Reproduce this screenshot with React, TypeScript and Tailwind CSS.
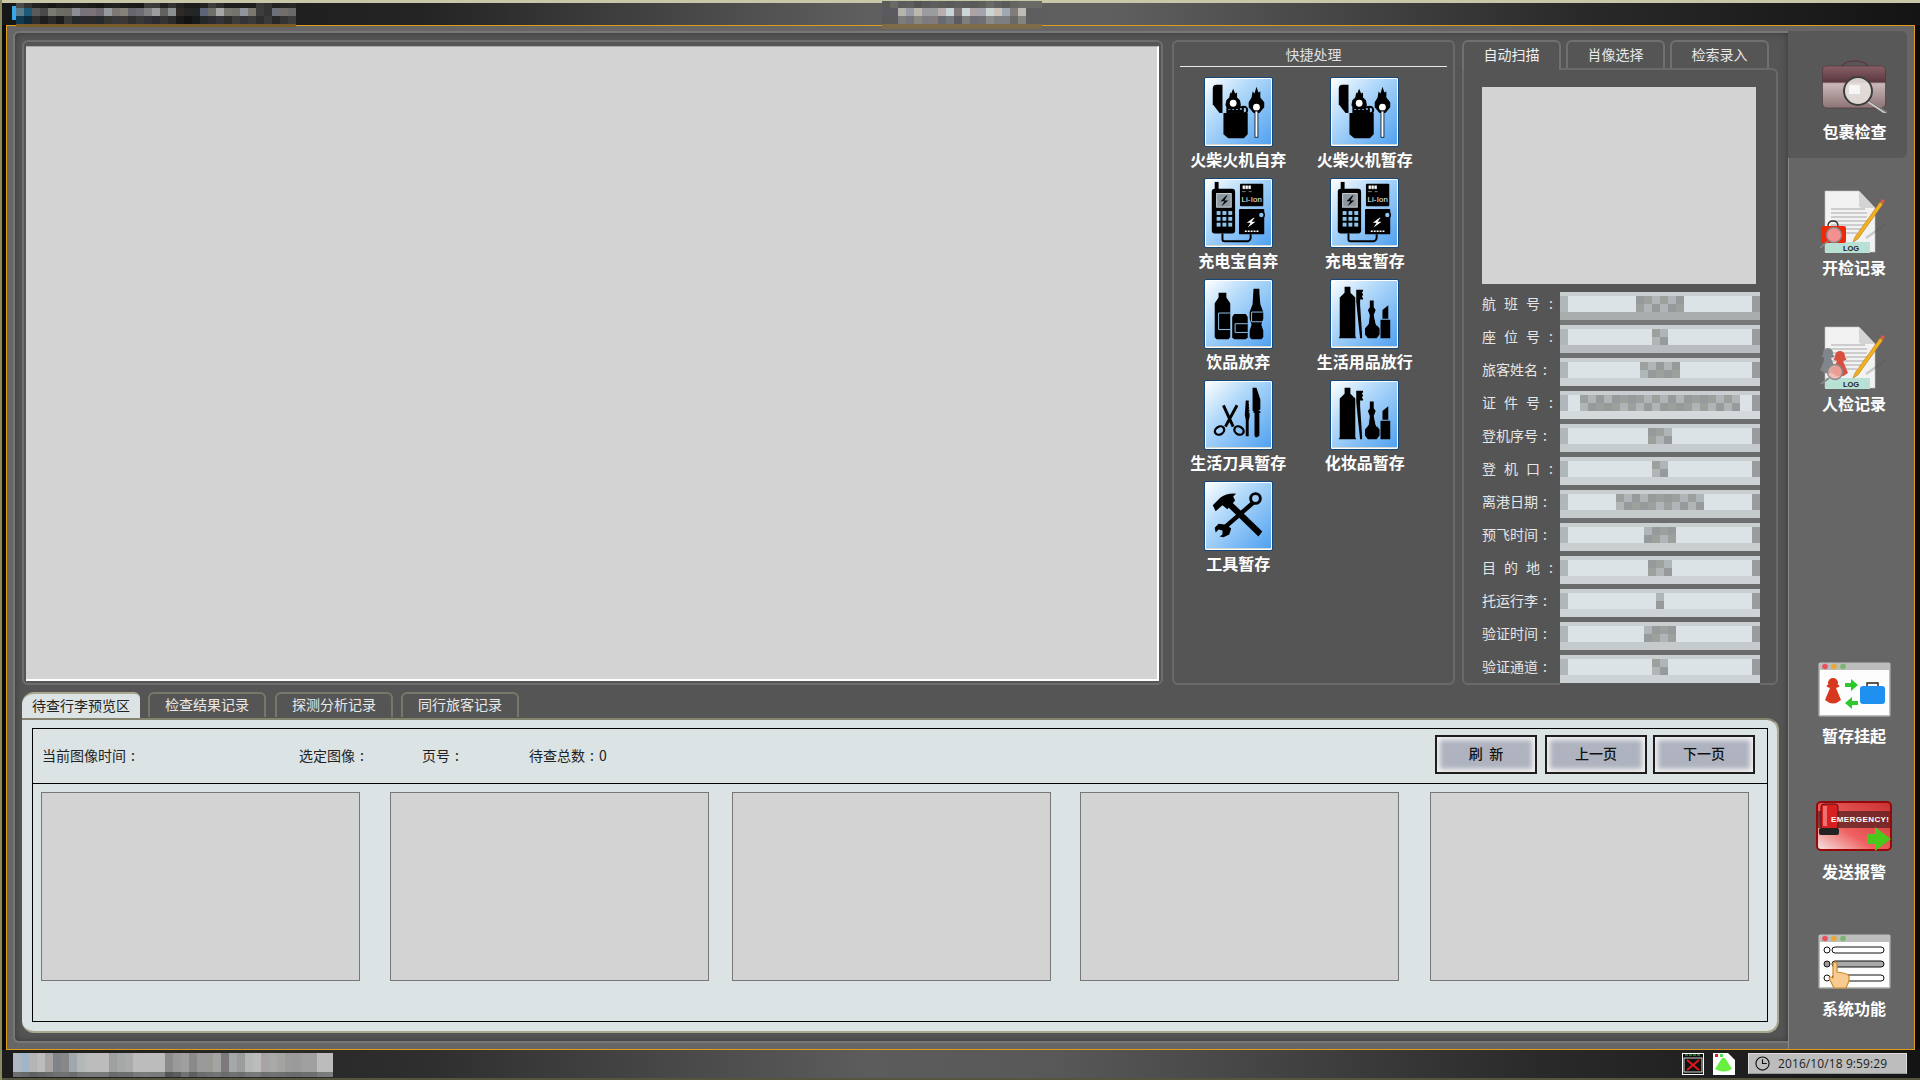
import React from "react";

const cjk = "font-['Noto_Sans_CJK_SC','Noto_Sans',sans-serif]";

// grey mosaic (the blurred out parts of the screenshot)
const Blocks = ({ shades, w = 8, h = 8 }: { shades: string; w?: number; h?: number }) => (
    <div className="flex">
        {shades.split(" ").map((c, i) => (
            <div key={i} style={{ background: `#${c}`, width: w, height: h }} />
        ))}
    </div>
);

const palette = ["969a9b", "a6acaf", "868c8f", "b0b6b8", "c2c7c8", "777c80", "9ca19d", "cdd2d3", "8e939a"];
const mix = (n: number, seed: number) =>
    Array.from({ length: n }, (_, i) => palette[(i * 5 + seed * 3 + (i % 3)) % palette.length]).join(" ");

const Field = ({ label, spaced, n, band, dark }: { label: string; spaced?: boolean; n: number; band: string; dark: string }) => (
    <div className="flex h-[33px] w-[278px] items-start">
        <div className="flex h-[22px] w-[78px] items-center text-[14px] text-[#e6e6e6]">
            <span className={spaced ? "tracking-[8px]" : ""}>{label}</span>
            <span className={spaced ? "ml-[1px]" : "ml-[5px]"}>:</span>
        </div>
        <div className="w-[200px]">
            <div className="h-[4px] bg-[#c9cfd1]" />
            <div className="flex h-[16px]">
                <div className="w-[8px] bg-[#b0b7ba]" />
                <div className="flex flex-1 items-center justify-center bg-[#dce3e6]">
                    <div>
                        <Blocks shades={mix(n, n)} />
                        <Blocks shades={mix(n, n + 2)} />
                    </div>
                </div>
                <div className="w-[8px] bg-[#999b9c]" />
            </div>
            <div className="h-[8px]" style={{ background: band }} />
            <div className="h-[5px]" style={{ background: dark }} />
        </div>
    </div>
);

const fields = [
    { label: "航班号", spaced: true, n: 6, band: "#a9adae", dark: "#767878" },
    { label: "座位号", spaced: true, n: 2, band: "#b9bdbf", dark: "#6f7071" },
    { label: "旅客姓名", n: 5, band: "#ccd2d4", dark: "#666767" },
    { label: "证件号", spaced: true, n: 20, band: "#d4dadc", dark: "#6c6d6e" },
    { label: "登机序号", n: 3, band: "#c5cbcd", dark: "#6a6b6b" },
    { label: "登机口", spaced: true, n: 2, band: "#cdd3d5", dark: "#6a6b6b" },
    { label: "离港日期", n: 11, band: "#c5cbcd", dark: "#6d6e6f" },
    { label: "预飞时间", n: 4, band: "#c9cfd1", dark: "#666767" },
    { label: "目的地", spaced: true, n: 3, band: "#cdd3d5", dark: "#6a6b6b" },
    { label: "托运行李", n: 1, band: "#cfd5d7", dark: "#666767" },
    { label: "验证时间", n: 4, band: "#c5cbcd", dark: "#6a6b6b" },
    { label: "验证通道", n: 2, band: "#cdd3d5", dark: "#555555" },
];

// black silhouettes for the quick buttons, all on a 69x70 box
const Lighter = () => (
    <svg viewBox="0 0 69 70" className="h-full w-full">
        <path d="M8 11q0-4 4-4h6v29h-3l-7-9z" fill="#000" />
        <path d="M19 36h25v22l-4 4H24l-5-4z" fill="#000" />
        <rect x="22" y="29" width="18" height="7" fill="#000" />
        <circle cx="40" cy="33" r="3.5" fill="none" stroke="#000" strokeWidth="2" />
        <path d="M24 32h14" stroke="#8fc4f2" strokeWidth="1.5" strokeDasharray="2 2" />
        <path d="M29 11l2 5 2-1 0 5 3 3 1 5-3 4H24l-3-4 1-5 3-3 1-5 1 1z" fill="#000" />
        <circle cx="29" cy="26" r="3.5" fill="#fff" />
        <path d="M53 9l2 6 2-1 0 6 4 5 0 5-5 6h-6l-5-6 0-5 3-5 1-6 2 2z" fill="#000" />
        <circle cx="53" cy="30" r="3.5" fill="#fff" />
        <rect x="51.5" y="34" width="3" height="27" fill="#fff" stroke="#000" strokeWidth="0.8" />
    </svg>
);

const Charger = () => (
    <svg viewBox="0 0 69 70" className="h-full w-full">
        <rect x="10" y="3" width="4" height="12" fill="#000" />
        <rect x="7" y="10" width="24" height="46" rx="3" fill="#000" />
        <rect x="12" y="15" width="15" height="14" fill="#8e98a0" stroke="#cfd8dd" strokeWidth="1" />
        <path d="M22 17l-6 6h4l-3 5 7-6h-4l3-5z" fill="#000" />
        {[33, 39, 45].map((y) =>
            [12, 18, 24].map((x) => <rect key={`${x}${y}`} x={x} y={y} width="4" height="4" fill="#8cc4ee" />)
        )}
        <path d="M18 56v6q0 2 2 2h24q2 0 3-3v-4" fill="none" stroke="#000" strokeWidth="2" />
        <rect x="36" y="5" width="24" height="23" rx="1" fill="#000" />
        <path d="M39 7h2v3h-2zM42 7h2v3h-2zM45 7h2v3h-2zM38 13h4M45 13h3" fill="#fff" stroke="#fff" strokeWidth="0.5" />
        <text x="37.5" y="24" fontSize="8" fill="#fff" textLength="21" fontFamily="Liberation Sans, sans-serif">Li-Ion</text>
        <rect x="35" y="31" width="26" height="26" rx="1" fill="#000" />
        <circle cx="58" cy="37" r="3" fill="#8cc4ee" stroke="#000" strokeWidth="1.5" />
        <path d="M50 40l-7 5h4l-3 5 8-6h-4l3-4z" fill="#fff" />
        <path d="M41 53h2v1.5h-2zM44 53h2v1.5h-2zM47 53h2v1.5h-2zM50 53h2v1.5h-2zM53 53h2v1.5h-2z" fill="#fff" />
    </svg>
);

const Drinks = () => (
    <svg viewBox="0 0 69 70" className="h-full w-full">
        <path d="M14 13h8v5l4 6v35l-2 2H12l-2-2V24l4-6z" fill="#000" />
        <path d="M26 34H14v17h12" fill="none" stroke="#8cc4ee" strokeWidth="1" />
        <path d="M30 35h12l2 3v21l-2 2H30l-2-2V38z" fill="#000" />
        <path d="M44 45H31v9h13" fill="none" stroke="#8cc4ee" strokeWidth="1" />
        <path d="M50 9h6v4l1 12 3 8v7l-2 6 2 6v7l-2 2h-10l-2-2v-7l2-6-2-6v-7l3-8z" fill="#000" />
        <path d="M60 33H48v10h12" fill="none" stroke="#8cc4ee" strokeWidth="1" />
    </svg>
);

const Toiletries = () => (
    <svg viewBox="0 0 69 70" className="h-full w-full">
        <path d="M14 7h6v6l5 5v40l1 2H8l1-2V18l5-5z" fill="#000" />
        <path d="M26 10h7v2h-1v2h1v2h-1v2h1v2h-3v6l2 30v4h-2l-2-18-2-20z" fill="#000" />
        <path d="M40 21h4v7l2 3-2 5 2 9 4 5v6l-3 4H38l-3-4v-6l4-5 1-9-2-5 2-3z" fill="#000" />
        <path d="M39 38l-2 9M45 38l2 9" stroke="#8cc4ee" strokeWidth="0.9" />
        <path d="M53 34v-3l6-5v14h-6zM51 41h10v19H51z" fill="#000" />
    </svg>
);

const Blades = () => (
    <svg viewBox="0 0 69 70" className="h-full w-full">
        <path d="M19 25l10 22M33 25L21 47" stroke="#000" strokeWidth="3" />
        <ellipse cx="15" cy="51" rx="5" ry="4" transform="rotate(-30 15 51)" fill="none" stroke="#000" strokeWidth="2.4" />
        <ellipse cx="35" cy="51" rx="5" ry="4" transform="rotate(30 35 51)" fill="none" stroke="#000" strokeWidth="2.4" />
        <path d="M42 20h3l1 16-1 5v16h-3v-17l-1-5z" fill="#000" />
        <path d="M45 23h1M45 26h1M45 29h1M45 32h1" stroke="#fff" strokeWidth="0.8" />
        <path d="M49 7h4l4 12v10l-2 2h-6zM50 31h7v2h-1v23l-2 2h-2l-1-2V33h-1z" fill="#000" />
    </svg>
);

const Tools = () => (
    <svg viewBox="0 0 69 70" className="h-full w-full">
        <path d="M50 21L20 47" stroke="#000" strokeWidth="4.5" />
        <circle cx="52" cy="17" r="5" fill="none" stroke="#000" strokeWidth="3" />
        <path d="M22 44l-8-1-4 4 1 5 3-3 4 1 0 4-3 2 4 1 6-3 2-6z" fill="#000" />
        <path d="M27 20l32 31-4 5-32-31z" fill="#000" />
        <path d="M8 24l8-8q7-5 16-4l-3 3 2 4-8 9-5-4-7 6z" fill="#000" />
    </svg>
);

const quick: [string, React.ReactNode][] = [
    ["火柴火机自弃", <Lighter />],
    ["火柴火机暂存", <Lighter />],
    ["充电宝自弃", <Charger />],
    ["充电宝暂存", <Charger />],
    ["饮品放弃", <Drinks />],
    ["生活用品放行", <Toiletries />],
    ["生活刀具暂存", <Blades />],
    ["化妆品暂存", <Toiletries />],
    ["工具暂存", <Tools />],
];

const QuickButton = ({ label, icon }: { label: string; icon: React.ReactNode }) => (
    <div className="flex h-[101px] flex-col items-center">
        <div className="h-[70px] w-[69px] rounded-[2px] border border-[#12497c] bg-[linear-gradient(135deg,#ffffff_0%,#b5dbfa_35%,#4d9ff0_100%)] shadow-[inset_0_0_0_1px_#ffffff,inset_0_-2px_0_#d8d8d0]">
            {icon}
        </div>
        <div className="mt-[1px] h-[22px] whitespace-nowrap text-[16px] font-bold leading-[22px] text-white">{label}</div>
    </div>
);

// sidebar pictures
const BagIcon = () => (
    <svg viewBox="0 0 66 54" className="h-[54px] w-[66px]">
        <defs>
            <linearGradient id="bagBody" x1="0" y1="0" x2="0" y2="1">
                <stop offset="0" stopColor="#8a6068" />
                <stop offset="0.38" stopColor="#5a3840" />
                <stop offset="0.42" stopColor="#cbb8b8" />
                <stop offset="1" stopColor="#8d7476" />
            </linearGradient>
        </defs>
        <path d="M20 8q2-6 13-6t13 6" fill="none" stroke="#5e3a3e" strokeWidth="1.6" />
        <rect x="0.5" y="7" width="63" height="42" rx="4" fill="url(#bagBody)" stroke="#4a3034" strokeWidth="0.6" />
        <path d="M46 42l18 12" stroke="#c8c8c8" strokeWidth="3" />
        <path d="M46 41l18 12" stroke="#555" strokeWidth="1" />
        <circle cx="36" cy="32" r="14" fill="#e6e0dc" fillOpacity="0.9" stroke="#3e3e3e" strokeWidth="2" />
        <path d="M27 26h11v9H27z" fill="#f6f6f6" />
    </svg>
);

const LogDoc = ({ children }: { children: React.ReactNode }) => (
    <svg viewBox="0 0 69 64" className="h-[64px] w-[69px]">
        <path d="M5 1h34l16 17v44H5z" fill="#f2f2f2" stroke="#c4c4c4" strokeWidth="0.6" />
        <path d="M39 1l16 17H42q-3 0-3-3z" fill="#d4d4d4" />
        <path d="M11 19h34M11 23h36M11 27h36M11 31h36M11 35h36M11 39h30M11 43h26" stroke="#a8a8a8" strokeWidth="1.2" />
        <rect x="5" y="52" width="45" height="11" fill="#b8e0d4" />
        <text x="31" y="61" fontSize="7.5" fontWeight="700" fill="#222" textAnchor="middle" fontFamily="Liberation Sans, sans-serif">LOG</text>
        <path d="M35 47l25-35 3 2-25 35-5 3z" fill="#f0b020" stroke="#a87010" strokeWidth="0.5" />
        <path d="M60 12l2-3 3 2-2 3z" fill="#d86040" />
        <path d="M46 48l20-14" stroke="#555" strokeWidth="2.5" opacity="0.25" />
        {children}
    </svg>
);

const WindowIcon = ({ children }: { children: React.ReactNode }) => (
    <svg viewBox="0 0 73 55" className="h-[55px] w-[73px]">
        <rect x="0.5" y="0.5" width="72" height="54" rx="1.5" fill="#bdbdbd" />
        <rect x="2" y="8" width="69" height="45" fill="#fdfdfd" />
        <circle cx="7" cy="4.5" r="2.8" fill="#e8535f" />
        <circle cx="16" cy="4.5" r="2.8" fill="#e8a838" />
        <circle cx="25" cy="4.5" r="2.8" fill="#78b870" />
        {children}
    </svg>
);

const Person = ({ x, y, fill = "#d83820" }: { x: number; y: number; fill?: string }) => (
    <g>
        <circle cx={x} cy={y} r="5" fill={fill} />
        <ellipse cx={x} cy={y + 3} rx="6.5" ry="2" fill={fill} />
        <path d={`M${x - 3} ${y + 5}h6l5 12q-8 7-16 0z`} fill={fill} />
    </g>
);

const SideItem = ({ label, icon, top, gap, active }: { label: string; icon: React.ReactNode; top: string; gap: string; active?: boolean }) => (
    <div className={`flex flex-col items-center ${top} ${active ? "h-[127px] w-[119px] rounded-r-md bg-[#585858] pl-[14px] pt-[28px]" : "pl-[6px]"}`}>
        <div className="flex justify-center">{icon}</div>
        <div className={`${gap} h-[22px] text-[16px] font-bold leading-[22px] text-white`}>{label}</div>
    </div>
);

const Thumb = ({ className }: { className?: string }) => (
    <div className={`h-[189px] w-[319px] border border-[#777777] bg-[#d3d3d3] ${className ?? ""}`} />
);

const BottomButton = ({ label, className }: { label: string; className?: string }) => (
    <div className={`flex h-[39px] w-[102px] items-center justify-center whitespace-pre border-2 border-[#1d1d1d] bg-[#aeb3bf] pb-[2px] text-[14px] font-medium text-[#111] shadow-[inset_0_0_5px_3px_#f2f2f2] ${className ?? ""}`}>
        {label}
    </div>
);

const tabBase = "flex h-[28px] w-[99px] items-center justify-center rounded-t-md border-x-2 border-t-2 border-[#707070] bg-[#555555] pb-[2px] text-[14px] text-[#e8e8e8]";
const lowTab = "flex h-[25px] w-[118px] items-center justify-center rounded-t-md border-x-2 border-t-2 border-[#78786a] pb-[2px] text-[14px] text-[#e8e8e8]";

export default function App() {
    return (
        <div className={`flex h-[1080px] w-[1920px] flex-col overflow-hidden border-l-2 border-[#8a8a60] bg-[#0a0a0a] ${cjk}`}>
            {/* title bar */}
            <div className="relative z-10 flex h-[25px] shrink-0 items-start border-t-[3px] border-[#c8c8a8] bg-[linear-gradient(90deg,#161616_0%,#242424_22%,#5f5f5f_45%,#5f5f5f_58%,#2a2a2a_82%,#141414_100%)] pl-[10px]">
                <div className="mt-[3px] h-[14px] w-[4px] bg-[#3aa6e8]" />
                <div>
                    <Blocks h={5} shades="4a4a4a 333333 222222 1c1c1c 161616 1e1e1e 1c1c1c 202020 1e1e1e 1a1a1a 161616 1f1f1f 222222 1c1c1c 1a1a1a 181818 3c3c3c 3a3a3a 222222 333333 242424 1c1c1c 1c1c1c 222222 3c3c3c 2e2e2e 1e1e1e 1e1e1e 1e1e1e 1e1e1e 3a3a3a 333333 222222 262626 282828" />
                    <Blocks shades="5a7a8a 1e5a78 5a5a5a 4a4a4a 7a7a72 6d6d68 6a6a62 8a8e94 77737c 7a7478 6f6a70 959a9c 7c7874 86827a 66666c 6c6c74 808084 9c9c9e 62625e 8a8e8e 2e2a28 262626 222626 5c6478 706e68 a6a6a6 7a7672 74746c 90949c 7c7870 3c3c3c 343434 6c7078 746e6a 6a6a6a" />
                    <Blocks shades="0e3a52 0c2a3a 2e2e2e 1e1e1e 2a2a2a 1c1c1c 3a3a36 262a2c 2c2a2e 2a2a2a 262a2e 343430 38383a 3c3836 2e3030 383838 303238 2c2c30 343434 2a2a2a 181818 121212 161a1a 24282a 2c2c30 343438 2c2c2a 3c3c3a 343438 3a3a3a 2e2e2e 3a3a3a 282828 343434 3e3c3c" />
                    <div className="h-[3px] w-[280px] bg-[#7a5c28]" />
                </div>
                <div className="ml-[586px] -mt-[2px]">
                    <Blocks h={7} shades="5a5a58 6a6a66 5c5c5a 5e5e5e 545454 5a5a5a 5e5e5e 5c5c58 5a5a5a 5e5e5c 5c5c5c 5a5a5a 5e5e5a 6a6a68 606060 5a5a5a 666660 6a6a66 6a6a66 6a6a66" />
                    <Blocks shades="5a5a60 5a5a60 b4b4aa 9a9aa4 bcb8b0 9c9ca0 9a9ca0 b8aeae c8d4d8 807878 ccd6d6 aca4a4 a4a4ae ccd4d4 cac4bc a0a8b4 807c7c bcbcb4 5e5e5e 5e5e5e" />
                    <Blocks shades="5a5a5a 5a5a5a 7c7c7a 74747a 8a8680 7c7c80 807c7a 6a6a72 74787c 5c5c60 807e7c 6c6c72 6e7074 8a8a86 7c7e82 7c7e82 6a6868 84847e 5e5e5e 5e5e5e" />
                    <div className="h-[5px] w-[160px] bg-[#7d6b4a]" />
                </div>
            </div>

            {/* main area inside the orange line */}
            <div className="ml-[4px] mr-[5px] flex h-[1025px] shrink-0 border border-[#e09a1c] bg-[#666666] pl-[6px] pt-[5px]">
                <div className="h-[1012px] w-[1775px] rounded-l-md border-y-2 border-l-2 border-[#777777] bg-[#555555] pl-[7px] pt-[7px] shadow-[inset_0_0_7px_#383838]">
                    <div className="flex h-[645px]">
                        {/* video view */}
                        <div className="h-[645px] w-[1141px] rounded-md border-2 border-[#6e6e6e] pl-[2px] pt-[4px]">
                            <div className="h-[635px] w-[1133px] border-r-2 border-b-2 border-t border-white border-t-[#aaaaaa] bg-[#d3d3d3]" />
                        </div>

                        {/* quick actions */}
                        <div className="ml-[9px] h-[645px] w-[283px] rounded-md border-2 border-[#6a6a6a] pl-[1px]">
                            <div className="mx-[5px] flex h-[25px] w-[267px] items-center justify-center border-b border-[#e8e8e8] text-[14px] text-[#e0e0e0]">
                                快捷处理
                            </div>
                            <div className="mt-[10px] grid w-[253px] grid-cols-2">
                                {quick.map(([label, icon]) => (
                                    <QuickButton key={label} label={label} icon={icon} />
                                ))}
                            </div>
                        </div>

                        {/* passenger tabs */}
                        <div className="ml-[7px] h-[645px] w-[316px]">
                            <div className="flex h-[28px] gap-[5px]">
                                <div className={tabBase + " relative z-10 !h-[30px] border-b-0 !pb-[4px] text-[#f0f0f0]"}>自动扫描</div>
                                <div className={tabBase}>肖像选择</div>
                                <div className={tabBase}>检索录入</div>
                            </div>
                            <div className="h-[617px] rounded-tr-md rounded-b-md border-2 border-[#6a6a6a] pl-[18px] pt-[17px]">
                                <div className="h-[197px] w-[274px] bg-[#d3d3d3]" />
                                <div className="mt-[8px]">
                                    {fields.map((f) => (
                                        <Field key={f.label} {...f} />
                                    ))}
                                </div>
                            </div>
                        </div>
                    </div>

                    {/* lower tabs */}
                    <div className="mt-[7px] flex h-[26px] items-start">
                        <div className="flex h-[26px] w-[118px] items-center justify-center rounded-tl-xl rounded-tr-md border-t-2 border-[#a8a890] bg-[#dbe3e5] pb-[2px] text-[14px] text-[#222222]">
                            待查行李预览区
                        </div>
                        <div className={lowTab + " ml-[8px]"}>检查结果记录</div>
                        <div className={lowTab + " ml-[9px]"}>探测分析记录</div>
                        <div className={lowTab + " ml-[8px]"}>同行旅客记录</div>
                    </div>
                    <div className="h-[315px] w-[1757px] rounded-b-xl rounded-tr-xl border-t-2 border-r-2 border-b-2 border-[#a8a890] border-t-[#85856f] bg-[#dbe3e5] pl-[10px] pt-[8px]">
                        <div className="h-[294px] w-[1736px] border border-black">
                            <div className="flex h-[55px] items-center border-b border-black pb-[3px] pl-[9px] text-[14px] text-[#222222]">
                                <span className="mt-[2px] w-[257px]">当前图像时间<span className="ml-[5px]">:</span></span>
                                <span className="mt-[2px] w-[123px]">选定图像<span className="ml-[5px]">:</span></span>
                                <span className="mt-[2px] w-[107px]">页号<span className="ml-[5px]">:</span></span>
                                <span className="mt-[2px]">待查总数<span className="ml-[5px]">:</span><span className="ml-[5px]">0</span></span>
                                <BottomButton label="刷  新" className="ml-auto" />
                                <BottomButton label="上一页" className="ml-[8px]" />
                                <BottomButton label="下一页" className="ml-[6px] mr-[12px]" />
                            </div>
                            <div className="flex pl-[8px] pt-[8px]">
                                <Thumb />
                                <Thumb className="ml-[30px]" />
                                <Thumb className="ml-[23px]" />
                                <Thumb className="ml-[29px]" />
                                <Thumb className="ml-[31px]" />
                            </div>
                        </div>
                    </div>
                </div>

                {/* sidebar */}
                <div className="relative w-[126px]">
                    <div className="absolute bottom-0 left-0 top-[127px] w-px bg-[#8a8a8a]" />
                    <SideItem active label="包裹检查" top="" gap="mt-[7px]" icon={<BagIcon />} />
                    <SideItem
                        label="开检记录"
                        top="mt-[32px]"
                        gap="mt-[2px]"
                        icon={
                            <LogDoc>
                                <rect x="1" y="36" width="25" height="17" rx="2" fill="#f02808" />
                                <path d="M8 36q0-5 5-5t5 5" fill="none" stroke="#333" strokeWidth="1.4" />
                                <circle cx="14" cy="45" r="7.5" fill="#f49090" stroke="#888" strokeWidth="1.4" />
                                <path d="M8 51L0 58" stroke="#888" strokeWidth="1.6" />
                            </LogDoc>
                        }
                    />
                    <SideItem
                        label="人检记录"
                        top="mt-[48px]"
                        gap="mt-[2px]"
                        icon={
                            <LogDoc>
                                <Person x={8} y={27} fill="#80858c" />
                                <Person x={20} y={30} fill="#d85040" />
                                <circle cx="15" cy="46" r="7.5" fill="#f0b0a8" fillOpacity="0.8" stroke="#888" strokeWidth="1.4" />
                                <path d="M9 52L1 58" stroke="#888" strokeWidth="1.6" />
                            </LogDoc>
                        }
                    />
                    <SideItem
                        label="暂存挂起"
                        top="mt-[248px]"
                        gap="mt-[7px]"
                        icon={
                            <WindowIcon>
                                <Person x={15} y={21} />
                                <path d="M27 21h6v-4l7 6-7 6v-4h-6z" fill="#2cc82c" />
                                <path d="M40 39h-6v-4l-7 6 7 6v-4h6z" fill="#2cc82c" />
                                <rect x="42" y="24" width="25" height="18" rx="3" fill="#1e90f0" />
                                <path d="M49 24v-3h11v3" fill="none" stroke="#222" strokeWidth="1.4" />
                            </WindowIcon>
                        }
                    />
                    <SideItem
                        label="发送报警"
                        top="mt-[55px]"
                        gap="mt-[9px]"
                        icon={
                            <svg viewBox="0 0 76 50" className="h-[50px] w-[76px]">
                                <defs>
                                    <linearGradient id="alarmBg" x1="0" y1="1" x2="1" y2="0">
                                        <stop offset="0" stopColor="#f5e8e8" />
                                        <stop offset="0.4" stopColor="#f06060" />
                                        <stop offset="1" stopColor="#c83030" />
                                    </linearGradient>
                                </defs>
                                <rect x="1" y="1" width="74" height="48" rx="4" fill="url(#alarmBg)" stroke="#980808" strokeWidth="2" />
                                <rect x="2" y="10" width="72" height="17" fill="#5a2020" opacity="0.75" />
                                <rect x="5" y="3" width="17" height="26" rx="3" fill="#d82020" stroke="#501010" />
                                <rect x="7" y="5" width="4" height="20" fill="#f07070" />
                                <rect x="3" y="27" width="20" height="7" rx="2" fill="#222" />
                                <text x="15" y="21" fontSize="8" fontWeight="700" textLength="58" fill="#fff" fontFamily="Liberation Sans, sans-serif">EMERGENCY!</text>
                                <path d="M51 33h8v-7l16 12-16 12v-7h-8z" fill="#4ac81c" />
                            </svg>
                        }
                    />
                    <SideItem
                        label="系统功能"
                        top="mt-[52px]"
                        gap="mt-[8px]"
                        icon={
                            <WindowIcon>
                                <circle cx="9" cy="16" r="3" fill="#fff" stroke="#111" />
                                <rect x="14" y="13" width="52" height="6" rx="3" fill="#fff" stroke="#111" />
                                <circle cx="9" cy="30" r="3" fill="#999" stroke="#111" />
                                <rect x="14" y="27" width="52" height="6" rx="3" fill="#aaa" stroke="#111" />
                                <circle cx="9" cy="44" r="3" fill="#fff" stroke="#111" />
                                <rect x="14" y="41" width="52" height="6" rx="3" fill="#fff" stroke="#111" />
                                <path d="M15 29q2-2 4 0v9l6 1q6 1 6 4v4l-3 7H16l-5-10q1-2 4 0z" fill="#f8cc90" stroke="#c88a30" strokeWidth="1.2" />
                            </WindowIcon>
                        }
                    />
                </div>
            </div>

            {/* status bar */}
            <div className="flex h-[30px] shrink-0 items-start border-b-2 border-[#55553f] bg-[linear-gradient(90deg,#1c1c1c_0%,#2e2e2e_22%,#5c5c5c_45%,#585858_55%,#2a2a2a_80%,#141414_100%)] pl-[11px] pt-[3px]">
                <div>
                    <Blocks
                        h={19}
                        shades="b0b8c4 a4b4c8 b4b4b4 bcbcbc a8a4a4 808488 888888 a0a8ae b4b8b4 bcbcbc bcbcbc bcbcbc a0a0a0 a4a8a8 ababab bcbcbc bcbcbc bcbcbc bcbcbc 8c8c8c 9a9a9a a0a0a0 8a8a8a 9a9a9a 9a9a96 a4a4a4 7c787c a4a8a8 9c9c9c b4b8b4 bcbcbc a8a4a4 a8aaaa a4a4a0 9c9c9c 9a9a9a a0a0a0 a0a0a0 bcbcbc bcbcbc"
                    />
                    <Blocks
                        h={5}
                        shades="6e6e6e 686868 606060 666666 6a6a6a 707070 727272 6c6c6c 787878 7a7a7a 7a7a7a 7a7a7a 6a6a6a 6e6e6e 6e6e6e 7a7a7a 7c7c7c 7a7a7a 7a7a7a 545454 5c5c5c 727272 5e5e5e 6c6c6c 707070 747474 6c6c6c 727272 6e6e6e 787878 7a7a7a 707070 727272 707070 6c6c6c 6a6a6a 6e6e6e 6e6e6e 7a7a7a 7c7c7c"
                    />
                </div>
                <svg viewBox="0 0 22 22" className="ml-auto h-[22px] w-[22px]">
                    <rect width="22" height="22" fill="#fff" />
                    <rect x="1" y="1" width="20" height="20" fill="#111" />
                    <path d="M3 2h16" stroke="#3cd43c" strokeWidth="1" strokeDasharray="3 1" />
                    <rect x="2" y="5" width="18" height="14" fill="#111" stroke="#fff" strokeWidth="0.8" />
                    <path d="M5 7l12 10M17 7L5 17" stroke="#e81818" strokeWidth="1.8" />
                </svg>
                <svg viewBox="0 0 22 22" className="ml-[9px] h-[22px] w-[22px]">
                    <path d="M0 0h15l7 7v15H0z" fill="#fff" />
                    <rect x="2" y="1" width="3" height="3" fill="#e81818" />
                    <rect x="7" y="1" width="3" height="3" fill="#50e050" />
                    <path d="M9 5h3l7 11q-8 5-17 0z" fill="#68f040" />
                </svg>
                <div className="ml-[13px] mr-[13px] flex h-[21px] w-[159px] items-center border border-[#dddddd] border-b-[#999999] bg-[#bdbdbd] pl-[6px] font-['Open_Sans',sans-serif] text-[12px] tracking-[0.1px] text-[#222222]">
                    <svg viewBox="0 0 16 16" className="mr-[8px] h-[15px] w-[15px]">
                        <circle cx="8" cy="8" r="7" fill="none" stroke="#111" strokeWidth="1.2" />
                        <path d="M8 3.5V8h4.5" fill="none" stroke="#111" strokeWidth="1.2" />
                    </svg>
                    2016/10/18 9:59:29
                </div>
            </div>
        </div>
    );
}
